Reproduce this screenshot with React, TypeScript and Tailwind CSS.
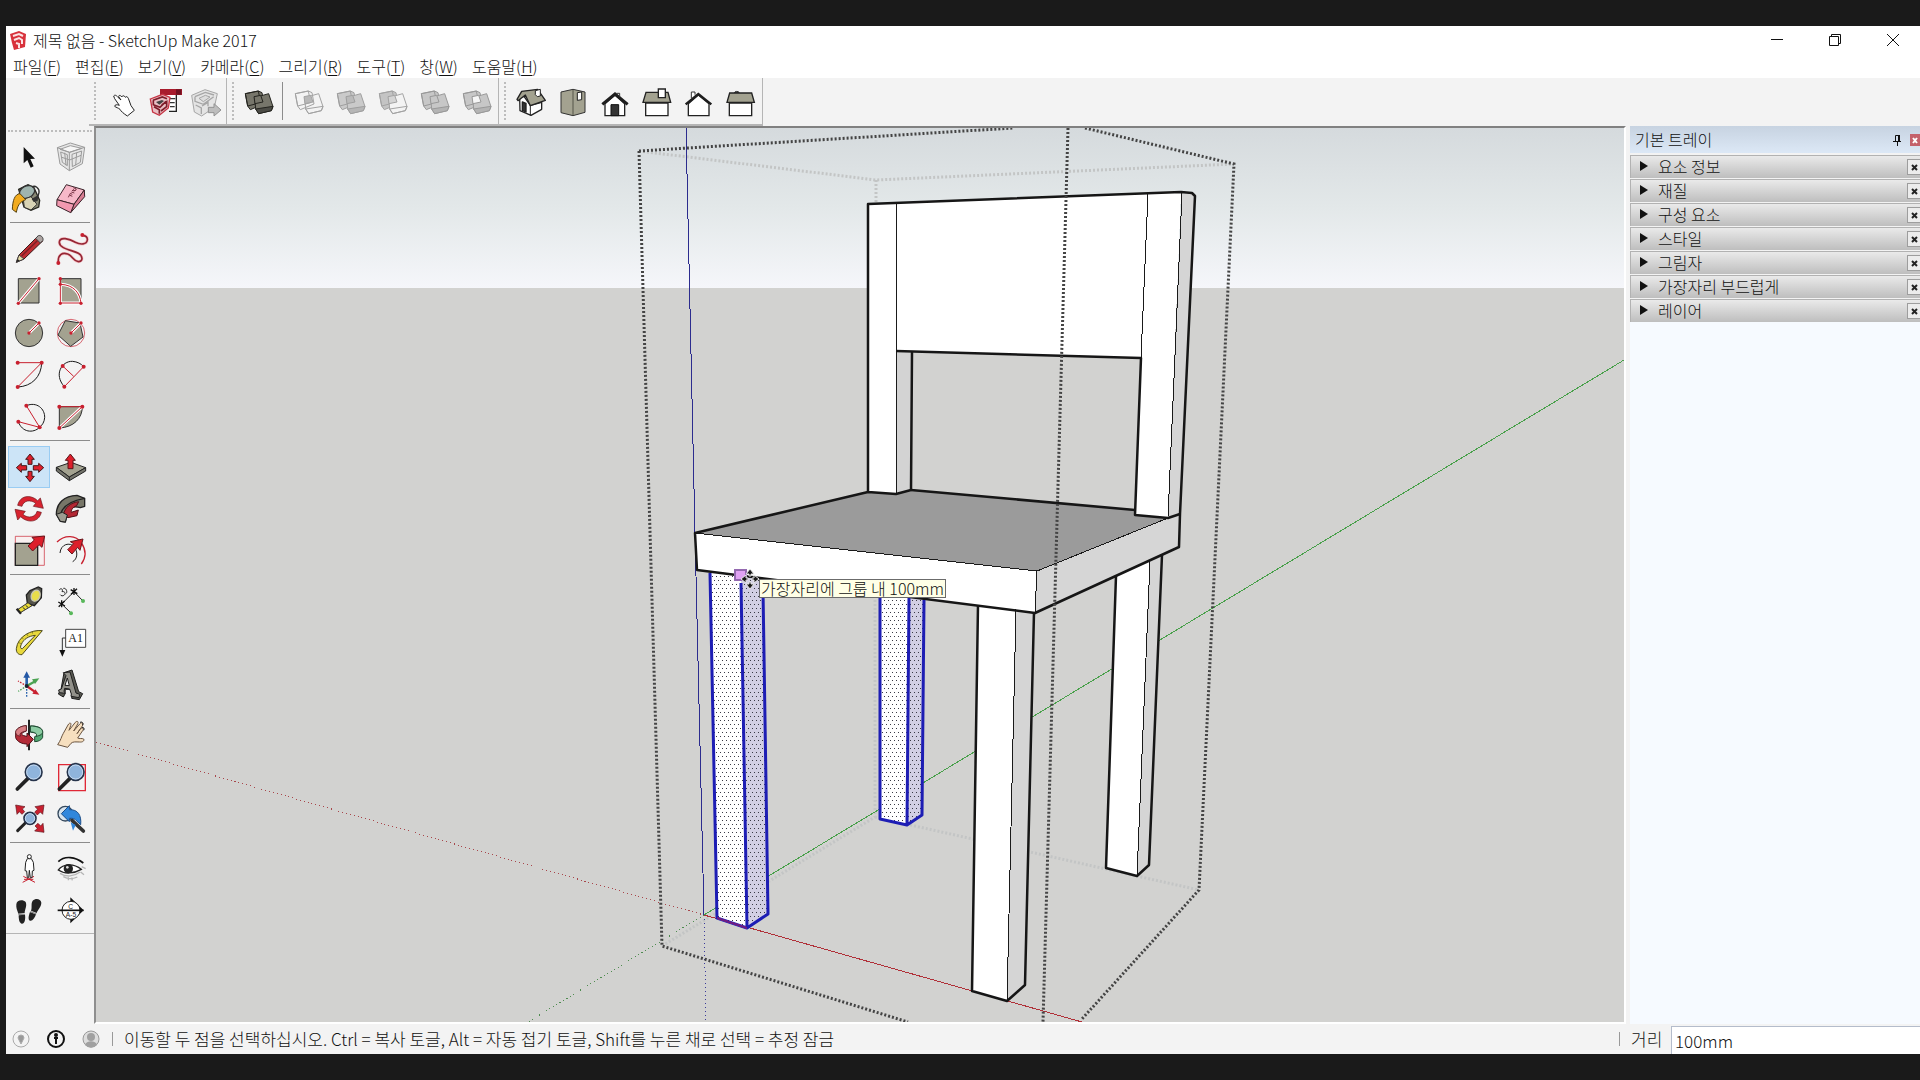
import type { ReactNode } from "react";

const RED = "#c8202f";
const INK = "#1a1a1a";
const STONE = "#a3a290";

const menus = [
  { label: "파일", hotkey: "F" },
  { label: "편집", hotkey: "E" },
  { label: "보기", hotkey: "V" },
  { label: "카메라", hotkey: "C" },
  { label: "그리기", hotkey: "R" },
  { label: "도구", hotkey: "T" },
  { label: "창", hotkey: "W" },
  { label: "도움말", hotkey: "H" },
];

const panels = ["요소 정보", "재질", "구성 요소", "스타일", "그림자", "가장자리 부드럽게", "레이어"];

// Icons are drawn at three units to the pixel, "at" is the corner of a 42px cell
const Tool = ({
  name,
  at,
  active,
  children,
}: {
  name: string;
  at: string;
  active?: boolean;
  children: ReactNode;
}) => (
  <button
    type="button"
    aria-label={name}
    className={
      active
        ? "h-[42px] w-[42px] shrink-0 border border-[#99ccf3] bg-[#cce4f7]"
        : "h-[42px] w-[42px] shrink-0 border border-transparent"
    }
  >
    <svg viewBox={at + " 126 126"} className="-m-px block h-[42px] w-[42px] max-w-none" fill="none">
      {children}
    </svg>
  </button>
);

const Dots = ({ points, r = 6 }: { points: number[][]; r?: number }) => (
  <g fill={RED}>
    {points.map(([x, y]) => (
      <circle key={x + "-" + y} cx={x} cy={y} r={r} />
    ))}
  </g>
);

const Grip = () => (
  <div className="my-1 mr-1 w-0 border-l-2 border-dotted border-[#bdbdbd]" />
);

const Row = ({ children }: { children: ReactNode }) => <div className="flex">{children}</div>;

const Rule = () => <div className="mx-[2px] mt-[2px] mb-[5px] h-px bg-[#8c8c8c]" />;

const Solids = ({
  name,
  back,
  front,
  side,
  inner,
  line,
}: {
  name: string;
  back: string;
  front: string;
  side: string;
  inner: string;
  line: string;
}) => (
  <Tool name={name} at="474 0">
    <g stroke={line} strokeWidth="3" strokeLinejoin="round">
      <path d="M496 41 535 33 546 38 552 72 511 89 503 78Z" fill={back} />
      <path d="M496 41 535 33 542 68 503 78Z" />
      <path d="M524 53 566 41 579 80 574 92 536 101 527 87Z" fill={front} />
      <path d="M527 87 579 79 574 92 536 101Z" fill={side} />
      <path d="M522 50 542 46 549 66 525 71Z" fill={inner} />
    </g>
  </Tool>
);

const Lens = ({ cx, cy, r }: { cx: number; cy: number; r: number }) => (
  <>
    <circle cx={cx} cy={cy} r={r} fill="#8fb4dc" stroke="#26334a" strokeWidth="5" />
    <circle cx={cx} cy={cy} r={r - 4} stroke="#c4d8ee" strokeWidth="3" />
  </>
);

const TopBar = () => (
  <div className="flex h-[49px] shrink-0 bg-[#f3f3f3]">
    <div className="ml-[83px] flex h-12 border-b-2 border-[#b5b5b5]">
      <div className="flex border-r border-[#b5b5b5] pl-[5px]">
        <Grip />
        <div className="flex w-[126px] items-center pl-[2px]">
          <Tool name="구성 요소 조작" at="66 0">
            <path d="M101 48c4-5 9-1 13 4l9 8-7-10c0-6 6-4 10 1 0-5 7-5 10 1 2-4 7-2 9 3l8 22 10 14-21 17c-12-8-19-14-22-20-6-5-11-5-16-9 0-5 7-6 14-3l-14-20z" fill="#fff" stroke="#222" strokeWidth="3" />
          </Tool>
          <Tool name="3D Warehouse" at="192 0">
            <path d="M247 30h42v64h-22" fill="#fff" stroke="#222" strokeWidth="4" />
            <path d="M240 27h66v18h-66z" fill="#a81b2c" />
            <path d="M288 28h16v16h-16z" fill="#701120" />
            <path d="M270 56h16M270 68h14M270 80h14" stroke="#333" strokeWidth="4" />
            <path d="M211 57 248 43 270 52 265 84 238 106 218 96Z" fill="#e9bfc4" stroke="#c63545" strokeWidth="4" />
            <path d="M219 61 247 51 261 56M220 61v13l20 8 18-18M222 80l16 9v12M245 75l15-10v15l-17 13" stroke="#7d1c29" strokeWidth="5" />
            <path d="M228 66l18-6 6 3-14 11z" fill="#444" />
          </Tool>
          <Tool name="구성 요소 공유" at="318 0">
            <g stroke="#a6a6a6" strokeWidth="3">
              <path d="M335 46 375 29 412 41 403 82 365 108 343 96Z" fill="#e4e4e4" />
              <path d="M345 50 376 37 402 45M345 50v14l25 9 31-23M347 75l17 9v18M366 78l18-11v12" strokeWidth="4" />
              <path d="M357 55l19-9 14 5-20 14z" fill="#ddd" />
              <path d="M385 82h17V71l21 19-21 18V98h-17z" fill="#bdbdbd" stroke="#929292" />
            </g>
          </Tool>
        </div>
      </div>
      <div className="flex border-r border-[#b5b5b5] pl-[5px]">
        <Grip />
        <div className="flex items-center">
          <Solids name="외부 셸" back="#77766b" front="#77766b" side="#4c4c46" inner="#77766b" line="#24241f" />
          <div className="mr-[5px] ml-[2px] h-[38px] w-px bg-[#8c8c8c]" />
          <Solids name="교차" back="none" front="none" side="none" inner="#b8b8b8" line="#a3a3a3" />
          <Solids name="합침" back="#cacaca" front="#cacaca" side="#b6b6b6" inner="#bababa" line="#9f9f9f" />
          <Solids name="빼기" back="#c4c4c4" front="#f3f3f3" side="none" inner="#d4d4d4" line="#a3a3a3" />
          <Solids name="자르기" back="#c7c7c7" front="#c7c7c7" side="#b4b4b4" inner="#c7c7c7" line="#999" />
          <Solids name="분할" back="#c7c7c7" front="#c7c7c7" side="#b4b4b4" inner="#f6f6f6" line="#999" />
        </div>
      </div>
      <div className="flex border-r border-[#b5b5b5] pl-[5px]">
        <Grip />
        <div className="flex items-center">
          <Tool name="등각 투영" at="91 30">
            <g stroke="#222" strokeWidth="4" strokeLinejoin="round">
              <path d="M120 84 133 79 152 106 186 97V118L154 136 121 122Z" fill="#fff" />
              <path d="M152 106v30" strokeWidth="3" />
              <path d="M128 96l11 4v26l-11-5z" fill="#333" />
              <path d="M126 64 174 58 197 91 152 107 137 75 115 92 112 88Z" fill={STONE} />
              <path d="M167 62l15-4v20l-9 2-6-6z" fill="#fff" strokeWidth="3" />
            </g>
          </Tool>
          <Tool name="맨 위" at="217 30">
            <path d="M244 66 280 58 316 66V127L280 137 244 128Z" fill={STONE} stroke="#333" strokeWidth="3" />
            <path d="M280 60v76" stroke="#555548" strokeWidth="3" />
            <path d="M293 68l13-2v23l-13 2z" fill="#fff" stroke="#222" strokeWidth="3" />
          </Tool>
          <Tool name="정면" at="343 30">
            <path d="M376 101V137h59V101L406 75Z" fill="#fff" stroke="#222" strokeWidth="4" />
            <path d="M394 104h23v33h-23z" fill="#333" stroke="#111" strokeWidth="3" />
            <path d="M368 103 406 72 444 103" stroke="#1e1e1e" strokeWidth="9" />
            <path d="M410 70h10v12" stroke="#333" strokeWidth="3" />
          </Tool>
          <Tool name="오른쪽" at="469 30">
            <path d="M498 99h67v38h-67z" fill="#fff" stroke="#222" strokeWidth="4" />
            <path d="M499 67h66l8 30h-83z" fill={STONE} stroke="#222" strokeWidth="4" />
            <path d="M536 57h21v26h-21z" fill="#fff" stroke="#222" strokeWidth="4" />
          </Tool>
          <Tool name="뒤" at="595 30">
            <path d="M635 84V66h11v8" fill="#fff" stroke="#333" strokeWidth="3" />
            <path d="M626 101V137h62V101L656 75Z" fill="#fff" stroke="#222" strokeWidth="4" />
            <path d="M618 103 656 72 695 103" stroke="#1e1e1e" strokeWidth="7" />
          </Tool>
          <Tool name="왼쪽" at="721 30">
            <path d="M764 68c1-5 13-5 15 0z" fill="#777" stroke="#333" strokeWidth="3" />
            <path d="M749 99h67v38h-67z" fill="#fff" stroke="#222" strokeWidth="4" />
            <path d="M750 69h66l8 28h-82z" fill={STONE} stroke="#222" strokeWidth="4" />
          </Tool>
        </div>
      </div>
    </div>
  </div>
);

const SideBar = () => (
  <div className="h-[807px] w-[88px] shrink-0 border-b border-[#b5b5b5] bg-[#f3f3f3] px-[2px]">
    <div className="mt-[3px] mb-[4px] border-t-2 border-dotted border-[#bdbdbd]" />
    <Row>
      <Tool name="선택" at="24 48">
        <path d="M71 81V130L82 120 92 143 101 139 91 117 105 116Z" fill="#111" />
      </Tool>
      <Tool name="구성 요소 만들기" at="150 48">
        <g stroke="#9b9b9b" strokeWidth="3" strokeLinejoin="round">
          <path d="M172 83 211 69 254 82 247 131 208 152 180 132Z" fill="#e6e6e6" />
          <path d="M180 88 211 77 245 85 209 97Z" fill="#f6f6f6" />
          <path d="M172 83 208 97 254 82M208 97V152M182 96l20 8v33l-15-10zM216 103l29-10-4 34-24 13z" />
          <path d="M186 112l23 8 34-14M194 98l4 38M230 98l-3 38" />
        </g>
      </Tool>
    </Row>
    <Row>
      <Tool name="페인트통" at="24 174">
        <path d="M56 208 84 194 102 203 119 241 116 261 93 271 72 261Z" fill="#8a8a76" stroke="#26261f" strokeWidth="4" />
        <ellipse cx="81" cy="216" rx="24" ry="18" transform="rotate(-28 81 216)" fill="#9fb4ae" stroke="#333" strokeWidth="4" />
        <path d="M70 238 93 230 111 253 93 270 73 262Z" fill="#d8d3b5" stroke="#333" strokeWidth="3" />
        <path d="M96 202c8-8 23 2 21 16-2 13-11 23-20 19" stroke="#2e2e2e" strokeWidth="4" />
        <path d="M60 221C44 222 38 242 37 268L49 277C53 258 57 247 77 239Z" fill="#f2ab1d" stroke="#57420d" strokeWidth="3" />
        <path d="M95 237l20-12-2 18-12 3z" fill="#333" />
      </Tool>
      <Tool name="지우개" at="150 174">
        <g stroke="#3a2229" strokeWidth="3" strokeLinejoin="round">
          <path d="M199 194 253 210 222 253 171 239Z" fill="#f7b8c8" />
          <path d="M253 210 254 230 212 278 222 253Z" fill="#d97d93" />
          <path d="M171 239 222 253 212 278 170 257Z" fill="#f299b0" />
        </g>
        <path d="M205 232l6-12 6 3M210 226l7 3M216 211l7 2M214 216l9 3M220 203l9 4-4 6-6-5" stroke="#773344" strokeWidth="3" />
      </Tool>
    </Row>
    <Rule />
    <Row>
      <Tool name="선" at="24 324">
        <path d="M49 427 57 405 113 349 129 362 72 417Z" fill="#bf2d31" stroke="#3b1b1b" strokeWidth="3" />
        <path d="M49 427 57 405 72 417Z" fill="#e4d9a4" stroke="#444" strokeWidth="3" />
        <path d="M49 427 53 417 59 422Z" fill="#222" />
        <path d="M107 355 115 347C122 344 131 352 129 361L121 369Z" fill="#ada4a2" stroke="#444" strokeWidth="3" />
        <path d="M65 408 112 362" stroke="#792026" strokeWidth="4" />
      </Tool>
      <Tool name="자유곡선" at="150 324">
        <path d="M175 428C173 403 187 397 203 402C218 407 220 424 235 425C251 424 248 407 235 400C216 390 177 386 178 366C180 349 208 356 226 367C242 375 260 374 262 360C263 351 256 347 248 346" stroke="#f6c9cc" strokeWidth="9" />
        <path d="M175 428C173 403 187 397 203 402C218 407 220 424 235 425C251 424 248 407 235 400C216 390 177 386 178 366C180 349 208 356 226 367C242 375 260 374 262 360C263 351 256 347 248 346" stroke="#962634" strokeWidth="5" />
        <Dots points={[[175, 429], [247, 345]]} />
      </Tool>
    </Row>
    <Row>
      <Tool name="직사각형" at="24 450">
        <path d="M55 476h62v73H55z" fill={STONE} stroke="#333" strokeWidth="3" />
        <path d="M55 550 117 476" stroke="#fff" strokeWidth="9" />
        <path d="M55 550 117 476" stroke={RED} strokeWidth="3" />
        <Dots points={[[55, 550], [117, 476]]} r={5} />
      </Tool>
      <Tool name="회전된 직사각형" at="150 450">
        <path d="M181 476h62v73h-62z" fill={STONE} stroke="#333" strokeWidth="3" />
        <path d="M181 493C222 494 240 520 243 549H181Z" stroke="#fff" strokeWidth="9" />
        <path d="M181 476V549H243C240 520 222 494 181 493" stroke={RED} strokeWidth="3" />
        <Dots points={[[181, 476], [181, 493], [181, 550], [243, 550]]} r={5} />
      </Tool>
    </Row>
    <Row>
      <Tool name="원" at="24 576">
        <circle cx="87" cy="639" r="41" fill={STONE} stroke="#333" strokeWidth="3" />
        <path d="M87 639 117 609" stroke="#fff" strokeWidth="9" />
        <path d="M87 639 117 609" stroke={RED} strokeWidth="3" />
        <Dots points={[[87, 639], [117, 609]]} r={5} />
      </Tool>
      <Tool name="다각형" at="150 576">
        <circle cx="213" cy="639" r="41" stroke={RED} strokeWidth="2" />
        <path d="M196 602 240 609 249 651 212 679 174 645Z" fill={STONE} stroke="#333" strokeWidth="3" />
        <path d="M213 639 243 609" stroke="#fff" strokeWidth="9" />
        <path d="M213 639 243 609" stroke={RED} strokeWidth="3" />
        <Dots points={[[213, 639], [243, 609]]} r={5} />
      </Tool>
    </Row>
    <Row>
      <Tool name="호" at="24 702">
        <path d="M125 728C124 770 96 799 53 801" stroke={INK} strokeWidth="3" />
        <path d="M53 728H125L53 801" stroke={RED} strokeWidth="3" />
        <Dots points={[[53, 728], [125, 728], [53, 801]]} />
      </Tool>
      <Tool name="2점 호" at="150 702">
        <path d="M193 800C160 763 186 723 217 724C232 725 243 731 251 740" stroke={INK} strokeWidth="3" />
        <path d="M193 800 251 740M188 738 221 769" stroke={RED} strokeWidth="3" />
        <Dots points={[[193, 800], [251, 740], [188, 738]]} />
      </Tool>
    </Row>
    <Row>
      <Tool name="3점 호" at="24 828">
        <path d="M79 857C110 844 135 866 134 893C133 906 127 915 119 922C99 941 66 937 55 905" stroke={INK} strokeWidth="3" />
        <path d="M79 857 119 922 55 905" stroke={RED} strokeWidth="3" />
        <Dots points={[[79, 857], [119, 922], [55, 905]]} />
      </Tool>
      <Tool name="파이" at="150 828">
        <path d="M178 860H247C247 895 221 922 178 924Z" fill={STONE} stroke="#333" strokeWidth="3" />
        <path d="M178 924 247 860" stroke="#fff" strokeWidth="9" />
        <path d="M178 860H247L178 924" stroke={RED} strokeWidth="3" />
        <Dots points={[[178, 860], [247, 860], [178, 924]]} />
      </Tool>
    </Row>
    <Rule />
    <Row>
      <Tool name="이동" at="24 33" active>
        <g fill="#dd1f2b" stroke="#44191c" strokeWidth="3" strokeLinejoin="round">
          <path d="M90 57 103 73H96V88H84V73H77Z" />
          <path d="M90 140 77 124H84V109H96V124H103Z" />
          <path d="M49 98 64 85V92H80V105H64V112Z" />
          <path d="M131 98 116 112V105H100V92H116V85Z" />
        </g>
      </Tool>
      <Tool name="밀기/끌기" at="150 33">
        <g stroke="#222" strokeWidth="3" strokeLinejoin="round">
          <path d="M169 97 213 82 257 98 208 126Z" fill={STONE} />
          <path d="M169 97V108L208 137 257 108V98L208 126Z" fill="#73736a" />
          <path d="M208 126v11" />
          <path d="M211 57 226 76H219V101H204V76H196Z" fill="#dd1f2b" stroke="#5b1519" />
        </g>
      </Tool>
    </Row>
    <Row>
      <Tool name="회전" at="24 159">
        <g fill="#d8232f" stroke="#6b161d" strokeWidth="2" strokeLinejoin="round">
          <path d="M53 211C60 181 91 177 113 197L121 189 130 220 100 214 107 205C91 192 70 197 66 214Z" />
          <path d="M124 232C117 262 84 266 62 245L53 255 45 223 76 229 69 238C84 252 107 247 111 229Z" />
        </g>
      </Tool>
      <Tool name="따라가기" at="150 159">
        <g stroke="#222" strokeWidth="4" strokeLinejoin="round">
          <path d="M169 238C169 204 193 182 231 181L254 190V214L241 218C216 211 203 222 202 237L196 261 181 259Z" fill="#777668" />
          <path d="M180 258C177 220 207 198 254 190" />
          <path d="M190 240C194 217 212 203 236 200L230 212C215 218 213 228 214 232L235 225 231 242 204 248Z" fill="#b32733" stroke="#511016" strokeWidth="3" />
          <path d="M169 238 181 259 196 261 202 240 187 232Z" fill="#9d9c91" strokeWidth="3" />
        </g>
      </Tool>
    </Row>
    <Row>
      <Tool name="배율" at="24 285">
        <path d="M46 304h87v87H46z" fill="#f8f0f0" stroke={RED} strokeWidth="2" />
        <path d="M46 325h67v66H46z" fill={STONE} stroke="#222" strokeWidth="4" />
        <path d="M134 303 126 337 117 329 98 348 84 333 103 315 96 307Z" fill="#dd1f2b" stroke="#68161c" strokeWidth="3" />
      </Tool>
      <Tool name="오프셋" at="150 285">
        <path d="M171 321C194 298 228 300 244 323C258 344 258 368 244 387" stroke={RED} strokeWidth="4" />
        <path d="M180 354C182 327 210 320 223 336C234 350 233 372 218 380" stroke="#222" strokeWidth="3" />
        <path d="M249 312 240 346 233 337 216 357 203 344 221 326 211 320Z" fill="#dd1f2b" stroke="#68161c" strokeWidth="3" />
      </Tool>
    </Row>
    <Rule />
    <Row>
      <Tool name="줄자" at="24 435">
        <path d="M90 467 115 456 125 461 124 488 103 512 82 505 79 480Z" fill="#55544c" stroke="#222" strokeWidth="4" />
        <ellipse cx="107" cy="482" rx="13" ry="17" transform="rotate(22 107 482)" fill="#e8dd4b" stroke="#c7c6b4" strokeWidth="4" />
        <path d="M84 503 96 512 61 533 51 525Z" fill="#eadb37" stroke="#333" strokeWidth="3" />
        <path d="M50 521 63 536" stroke="#222" strokeWidth="7" />
        <path d="M68 517l7 6M77 511l7 6" stroke="#333" strokeWidth="3" />
      </Tool>
      <Tool name="치수" at="150 435">
        <path d="M185 507 222 470 248 497M185 507 212 533" stroke="#222" strokeWidth="3" />
        <path d="M175 501l20 12M185 496v21M176 515l18-17M212 464l20 12M222 459v21M213 478l18-17" stroke="#111" strokeWidth="4" />
        <path d="M178 464c6-6 12-1 8 6 7-2 13 5 7 10-4 4-10 3-12-1M190 460c7-2 13 8 9 15" stroke="#222" strokeWidth="3" />
        <circle cx="249" cy="498" r="6" fill="#58b85a" />
        <circle cx="213" cy="535" r="6" fill="#58b85a" />
      </Tool>
    </Row>
    <Row>
      <Tool name="각도기" at="24 561">
        <path d="M127 587C94 583 53 604 49 641C48 653 56 660 66 659ZM106 601 67 641C61 642 60 635 64 628C71 612 86 603 106 601Z" fill="#e8d83c" fillRule="evenodd" stroke="#4b481c" strokeWidth="3" />
        <path d="M55 622l8 4M65 607l6 6M80 597l4 6M97 590l1 6" stroke="#6b661f" strokeWidth="2" />
      </Tool>
      <Tool name="문자" at="150 561">
        <path d="M197 583h60v54h-60z" fill="#fff" stroke="#444" strokeWidth="3" />
        <path d="M197 609H187V650" stroke="#333" strokeWidth="3" />
        <path d="M178 645h18l-9 20z" fill="#111" />
        <text x="227" y="620" textAnchor="middle" fill="#222" className="font-['Liberation_Serif'] text-[36px] font-normal">A1</text>
      </Tool>
    </Row>
    <Row>
      <Tool name="축" at="24 687">
        <path d="M80 753V724" stroke="#2a63ae" strokeWidth="8" />
        <path d="M70 728 80 709 90 728Z" fill="#2458a5" />
        <path d="M80 753 103 740" stroke="#4ba353" strokeWidth="7" />
        <path d="M118 730 105 747 96 733Z" fill="#4ba353" />
        <path d="M80 753 103 769" stroke={RED} strokeWidth="7" />
        <path d="M118 779 97 776 106 763Z" fill={RED} />
        <path d="M80 753 54 738" stroke={RED} strokeWidth="4" strokeDasharray="5 4" />
        <path d="M80 753 55 769" stroke="#4ba353" strokeWidth="4" strokeDasharray="5 4" />
        <path d="M80 753V786" stroke="#2a63ae" strokeWidth="4" strokeDasharray="5 4" />
        <circle cx="80" cy="753" r="6" fill="#1c2430" />
      </Tool>
      <Tool name="3D 문자" at="150 687">
        <g stroke="#1e1e1e" strokeWidth="3" strokeLinejoin="round">
          <path d="M192 713 216 705 236 770 248 776 238 794 215 790 216 778 211 763 196 763 195 777 190 786 175 777 183 763Z" fill="#595952" />
          <path d="M190 713 210 711 228 774 239 778 237 788 213 784 214 777 209 762 194 760 192 769 196 775 178 773 176 765 184 762 198 722Z" fill="#92918a" />
          <path d="M202 729 208 752 195 751Z" fill="#f3f3f3" />
        </g>
      </Tool>
    </Row>
    <Rule />
    <Row>
      <Tool name="궤도" at="24 42">
        <path d="M87 59V151" stroke="#222" strokeWidth="6" />
        <path d="M91 78C111 77 128 84 128 96V112C125 121 113 125 104 125V110C112 107 113 103 107 99L91 96Z" fill="#53a973" stroke="#1e4930" strokeWidth="3" />
        <path d="M91 78V96C103 96 114 101 108 109C120 107 129 102 128 95C127 84 111 78 91 78Z" fill="#8ccca3" stroke="#1e4930" strokeWidth="3" />
        <path d="M79 77C61 78 47 87 47 98V113C51 125 66 132 81 132V140L100 118 81 99V109C66 107 56 101 79 93Z" fill="#b32a37" stroke="#4e1219" strokeWidth="3" />
        <path d="M79 77C60 78 46 88 47 98C48 105 55 108 62 108C55 101 66 95 79 93Z" fill="#d88085" stroke="#4e1219" strokeWidth="2" />
      </Tool>
      <Tool name="이동 보기" at="150 42">
        <path d="M173 134C183 120 184 110 190 100L204 75C209 66 215 68 212 77L207 91 226 67C231 61 237 65 233 72L221 93 239 72C245 65 252 69 247 78L231 101 240 88C246 80 254 84 248 92L233 114C238 117 246 114 251 117C254 123 247 127 239 126C228 126 219 124 213 130L203 142Z" fill="#f6dfbf" stroke="#6a5440" strokeWidth="3" />
        <path d="M240 67c6-3 11 2 8 8M246 83c6-2 8 3 5 8" stroke="#222" strokeWidth="3" />
      </Tool>
    </Row>
    <Row>
      <Tool name="확대/축소" at="24 168">
        <path d="M52 267 84 235" stroke="#222" strokeWidth="11" strokeLinecap="round" />
        <Lens cx={101} cy={216} r={25} />
      </Tool>
      <Tool name="확대/축소 창" at="150 168">
        <path d="M176 194h80v78h-80z" stroke="#e02836" strokeWidth="4" />
        <path d="M178 267 210 235" stroke="#222" strokeWidth="11" strokeLinecap="round" />
        <Lens cx={227} cy={216} r={25} />
      </Tool>
    </Row>
    <Row>
      <Tool name="범위 확대" at="24 294">
        <g fill={RED} stroke="#5c1219" strokeWidth="2">
          <path d="M47 315 75 320 67 327 74 335 66 343 58 335 51 343Z" />
          <path d="M132 315 128 343 121 336 112 345 104 336 113 328 105 320Z" />
          <path d="M132 397 104 393 112 385 105 378 114 370 122 378 129 370Z" />
        </g>
        <path d="M53 392 76 369" stroke="#222" strokeWidth="9" strokeLinecap="round" />
        <Lens cx={90} cy={355} r={18} />
      </Tool>
      <Tool name="이전" at="150 294">
        <circle cx="196" cy="341" r="22" fill="#d8e4ee" stroke="#34485c" strokeWidth="4" />
        <path d="M216 361 250 393" stroke="#333" strokeWidth="11" strokeLinecap="round" />
        <path d="M184 341 208 317V329C233 328 245 345 242 374L229 362C225 356 218 354 208 355V365Z" fill="#3187dc" stroke="#1c4e8a" strokeWidth="3" />
        <path d="M212 367 227 375 219 392Z" fill="#3187dc" />
      </Tool>
    </Row>
    <Rule />
    <Row>
      <Tool name="카메라 배치" at="24 444">
        <path d="M68 547 102 529M70 529 105 547M72 538H100" stroke={RED} strokeWidth="3" />
        <g fill="#fff" stroke="#222" strokeWidth="3">
          <path d="M82 476 77 487 75 512 80 513 82 533H86L88 511 91 533H96L97 513 102 511 100 487 94 476Z" />
          <circle cx="88" cy="470" r="6" />
        </g>
      </Tool>
      <Tool name="둘러보기" at="150 444">
        <path d="M175 485C194 466 226 470 250 489" stroke="#111" strokeWidth="5" />
        <path d="M175 510C190 491 220 489 244 508C223 520 195 524 175 510Z" fill="#fff" stroke="#222" strokeWidth="4" />
        <circle cx="205" cy="506" r="14" fill="#222" />
        <circle cx="202" cy="502" r="4" fill="#ddd" />
        <path d="M180 520c18 12 42 10 60-4M190 530c12 7 27 8 42 1M205 532v9M215 533l2 8M245 500l12 6M242 516l10 8" stroke="#b5b5b5" strokeWidth="4" />
      </Tool>
    </Row>
    <Row>
      <Tool name="걷기" at="24 570">
        <g fill="#222">
          <path d="M49 613C50 599 69 597 77 606C82 618 74 629 74 639L55 641C51 630 48 624 49 613Z" />
          <path d="M56 646 75 644C77 657 74 671 66 671C58 671 56 658 56 646Z" />
          <path d="M98 602C106 594 122 595 124 608C124 621 113 629 110 639L93 632C97 622 92 611 98 602Z" />
          <path d="M90 636 108 643C104 655 97 664 90 662C83 660 86 646 90 636Z" />
        </g>
        <path d="M55 643h20M91 635l18 7" stroke="#888" strokeWidth="4" />
      </Tool>
      <Tool name="단면" at="150 570">
        <path d="M211 592 251 631 211 670Z" fill="#111" />
        <circle cx="213" cy="631" r="27" fill="#fff" stroke="#222" strokeWidth="3" />
        <path d="M173 631H251" stroke="#111" strokeWidth="5" />
        <text x="212" y="626" textAnchor="middle" fill="#222" className="font-['Liberation_Sans'] text-[20px] font-normal">C</text>
        <text x="213" y="651" textAnchor="middle" fill="#222" className="font-['Liberation_Sans'] text-[20px] font-normal">A-5</text>
      </Tool>
    </Row>
  </div>
);

const Model = () => (
  <svg
    viewBox="96 128 1528 894"
    preserveAspectRatio="xMinYMin slice"
    shapeRendering="crispEdges"
    className="block h-full w-full"
    fill="none"
  >
    <defs>
      <linearGradient id="sky" x1="0" y1="0" x2="0" y2="1">
        <stop offset="0" stopColor="#d5dadd" />
        <stop offset="0.5" stopColor="#e3e8e9" />
        <stop offset="1" stopColor="#f5f6fa" />
      </linearGradient>
      <pattern id="stipple" width="4" height="8" patternUnits="userSpaceOnUse">
        <path d="M0 0h1v1H0zM2 4h1v1H2z" fill="#3a3a46" />
      </pattern>
    </defs>
    <rect x="96" y="128" width="1528" height="894" fill="#d2d2d0" />
    <rect x="96" y="128" width="1528" height="160" fill="url(#sky)" />

    {/* hidden edges of the selection box */}
    <g stroke="#c3c5c5" strokeWidth="3" strokeDasharray="2 2" shapeRendering="auto">
      <path d="M639 151 876 180 1234 164M876 180V204" />
      <path d="M875 600V817L662 946M875 817 1199 890" />
    </g>

    {/* axes */}
    <path d="M96 742 704 915" stroke="#a8474c" strokeDasharray="1 3" />
    <path d="M704 915 528 1022" stroke="#4f8c50" strokeDasharray="1 3" />
    <path d="M704 915 706 1022" stroke="#3a3a9a" strokeDasharray="1 3" />
    <path d="M704 915 1624 360" stroke="#48a04a" />
    <path d="M704 915 1082 1022" stroke="#b03038" />
    <path d="M686 128 695 533 704 915" stroke="#2c2c8e" />

    {/* back rest */}
    <path d="M868 204 1181 192 1168 518 1135 515 1141 358 896 351V494L868 492Z" fill="#fff" />
    <path d="M1182 192 1195 195 1180 514 1168 518Z" fill="#d5d5d5" />
    <path d="M896 351 912 352 911 490 896 494Z" fill="#d3d3d3" />

    {/* seat */}
    <path d="M695 533 868 492 896 494 911 490 1135 510V515L1168 518 1037 571Z" fill="#9b9b9b" />
    <path d="M1037 571 1168 518 1180 514 1179 547 1035 613Z" fill="#d6d6d6" />

    {/* legs */}
    <path d="M978 603 1016 609 1007 1001 972 991Z" fill="#fff" />
    <path d="M1016 609 1034 612 1025 985 1007 1001Z" fill="#d5d5d5" />
    <path d="M1116 576 1150 561 1137 876 1106 868Z" fill="#fff" />
    <path d="M1150 561 1162 555 1149 865 1137 876Z" fill="#d5d5d5" />
    <path d="M710 571 741 575 747 928 717 918Z" fill="#fff" />
    <path d="M741 575 763 578 768 914 747 928Z" fill="#d2cfe4" />
    <path d="M880 592 909 596 907 825 880 819Z" fill="#fff" />
    <path d="M909 596 924 598 922 815 907 825Z" fill="#d2cfe4" />
    <path d="M710 571 763 578 768 914 747 928 717 918ZM880 592 924 598 922 815 907 825 880 819Z" fill="url(#stipple)" />
    <path d="M695 533 1037 571 1035 613 697 570Z" fill="#fff" />

    <g stroke={INK} strokeWidth="1">
      <path d="M896 203V494M1148 194 1141 358M1182 193 1168 517" />
      <path d="M695 533 1037 571 1168 518M1037 571 1035 612" />
      <path d="M1016 609 1007 1001M1150 561 1137 876" />
    </g>
    <g stroke="#161616" strokeWidth="2.5" strokeLinejoin="round" shapeRendering="auto">
      <path d="M868 492V204L1181 192 1192 193 1195 196 1180 514 1179 547 1035 613 697 570 695 533 868 492 896 494 911 490 912 352" />
      <path d="M896 351 1141 358 1135 515 1168 518 1180 514M911 490 1135 510" />
      <path d="M978 605 972 991 1007 1001 1025 985 1034 612" />
      <path d="M1116 576 1106 868 1137 876 1149 865 1162 555" />
    </g>
    <g stroke="#1d1db4" strokeWidth="3" strokeLinejoin="round" shapeRendering="auto">
      <path d="M710 573 717 918 747 928 768 914 763 590M741 583 747 928" />
      <path d="M880 597V819L907 825 922 815 924 600M909 597 907 825" />
    </g>
    <path d="M717 918 747 928" stroke="#6b1d86" strokeWidth="2" />

    {/* selection box */}
    <g stroke="#444" strokeWidth="3" strokeDasharray="2 2" shapeRendering="auto">
      <path d="M639 151 1013 128M1085 128 1234 164 1199 890 1081 1020" />
      <path d="M639 151 662 946 908 1022M1068 128 1043 1022" />
    </g>

    {/* snap point and move cursor */}
    <rect x="735" y="570" width="11" height="10" fill="#e0a2f3" stroke="#9469b0" strokeWidth="2" />
    <g fill={INK} stroke="#e8e8e8" strokeWidth="1" shapeRendering="auto">
      <path d="M750 569 754 574H751V576H749V574H746Z" />
      <path d="M750 589 746 584H749V582H751V584H754Z" />
      <path d="M741 579 746 575V578H748V580H746V583Z" />
      <path d="M759 579 754 583V580H752V578H754V575Z" />
    </g>
  </svg>
);

const Tray = () => (
  <aside className="-mt-px w-[290px] shrink-0 bg-[#f6faff]">
    <header className="flex h-[27px] items-center bg-linear-to-b from-[#c7d3e1] to-[#dce8f6] pl-[5px]">
      <h2 className="grow pb-[2px] text-base leading-6 font-light text-[#111]">기본 트레이</h2>
      <button type="button" aria-label="자동 숨김" className="mr-[7px] h-3 w-3">
        <svg viewBox="0 0 12 12" className="h-3 w-3" fill="none" stroke="#111">
          <path d="M4.500 7V1.500h4M2 7.500h8M6.500 8v4" />
          <path d="M8 1v6" strokeWidth="2" />
        </svg>
      </button>
      <button type="button" aria-label="닫기" className="h-3 w-[10px] bg-[#c4616b]">
        <svg viewBox="0 0 10 12" className="h-3 w-[10px]" stroke="#fff" strokeWidth="2">
          <path d="M3 4 7 9M7 4 3 9" />
        </svg>
      </button>
    </header>
    <div className="flex flex-col gap-px bg-[#f3f3f3] pt-[2px]">
      {panels.map((panel) => (
        <section
          key={panel}
          className="flex h-[23px] items-center border-t border-l border-[#b2b2b2] bg-linear-to-b from-[#eaeaea] to-[#bebebe]"
        >
          <button type="button" className="flex grow items-center pb-[2px] text-left text-base leading-5 font-light text-[#111]">
            <svg viewBox="0 0 8 10" className="mr-[10px] ml-[9px] h-[10px] w-2" fill="#111">
              <path d="M0 0 8 5 0 10Z" />
            </svg>
            {panel}
          </button>
          <button type="button" aria-label={panel + " 닫기"} className="h-4 w-[13px] border border-r-0 border-[#9d9d9d] bg-[#ececec]">
            <svg viewBox="0 0 12 14" className="h-[14px] w-3" stroke="#222" strokeWidth="2">
              <path d="M4 5 9 10M9 5 4 10" />
            </svg>
          </button>
        </section>
      ))}
    </div>
  </aside>
);

const StatusBar = () => (
  <footer className="flex h-[30px] shrink-0 items-center bg-[#f3f3f3] text-[#111]">
    <div className="flex gap-[17px] pl-[6px]">
      <svg viewBox="0 0 18 18" className="h-[18px] w-[18px]" fill="none" stroke="#aaa">
        <circle cx="9" cy="9" r="8" />
        <path d="M9 14 6 8a3 3 0 1 1 6 0z" fill="#999" />
      </svg>
      <svg viewBox="0 0 18 18" className="h-[18px] w-[18px]" fill="none" stroke="#111" strokeWidth="2">
        <circle cx="9" cy="9" r="8" />
        <path d="M9 7v7M7 8h4" />
        <circle cx="9" cy="5" r="1" />
      </svg>
      <svg viewBox="0 0 18 18" className="h-[18px] w-[18px]" fill="#a0a0a0">
        <circle cx="9" cy="9" r="8" fill="#ddd" stroke="#999" />
        <circle cx="9" cy="7" r="4" />
        <path d="M3 15c1-5 11-5 12 0a8 8 0 0 1-12 0z" />
      </svg>
    </div>
    <div className="mr-[11px] ml-3 h-[14px] w-px bg-[#999]" />
    <p className="grow text-[17px] leading-6 font-light">
      이동할 두 점을 선택하십시오. Ctrl = 복사 토글, Alt = 자동 접기 토글, Shift를 누른 채로 선택 = 추정 잠금
    </p>
    <div className="h-[14px] w-px bg-[#999]" />
    <label htmlFor="distance" className="w-[51px] pl-[11px] text-[17px] leading-6 font-light">
      거리
    </label>
    <input
      id="distance"
      defaultValue="100mm"
      className="h-[28px] w-[249px] self-end border-t border-l border-[#b4bccb] bg-white pl-[3px] text-[17px] leading-6 font-light outline-none"
    />
  </footer>
);

const App = () => {
  return (
    <div className="h-screen bg-[#1a1a1a] pt-[26px] pb-[26px] pl-[6px] font-['Noto_Sans_CJK_KR','Noto_Sans',sans-serif]">
      <div className="flex h-full flex-col overflow-hidden bg-[#f3f3f3]">
        <header className="flex h-[28px] shrink-0 items-center bg-white">
          <svg viewBox="0 0 18 20" className="ml-[3px] h-5 w-[18px]" fill="#d8323c">
            <path d="M1 4 10 1 17 4 16 17 5 20 3 13Z" />
            <path d="M4 6 10 4 14 6M5 10l5-2 3 2v4M7 13l3 1v4" fill="none" stroke="#fbe3e4" strokeWidth="2" />
          </svg>
          <h1 className="ml-[6px] grow text-base leading-6 font-light text-[#111]">제목 없음 - SketchUp Make 2017</h1>
          <div className="-mr-[2px] flex">
            <button type="button" aria-label="최소화" className="flex h-7 w-[58px] items-center justify-center">
              <svg viewBox="0 0 12 12" className="h-3 w-3" stroke="#111">
                <path d="M0 5.500h12" />
              </svg>
            </button>
            <button type="button" aria-label="이전 크기로" className="flex h-7 w-[58px] items-center justify-center">
              <svg viewBox="0 0 12 12" className="h-3 w-3" fill="none" stroke="#111">
                <path d="M.5 2.500h9v9h-9zM2.500 2.500v-2h9v9h-2" />
              </svg>
            </button>
            <button type="button" aria-label="닫기" className="flex h-7 w-[58px] items-center justify-center">
              <svg viewBox="0 0 12 12" className="h-3 w-3" stroke="#111">
                <path d="M0 0 12 12M12 0 0 12" />
              </svg>
            </button>
          </div>
        </header>
        <nav className="flex h-6 shrink-0 gap-[14px] bg-white pl-[7px]">
          {menus.map(({ label, hotkey }) => (
            <button key={hotkey} type="button" className="text-base leading-6 font-light text-[#111]">
              {label}(<u className="underline-offset-2">{hotkey}</u>)
            </button>
          ))}
        </nav>
        <TopBar />
        <main className="flex min-h-0 grow">
          <SideBar />
          <div className="relative -mt-px min-w-0 grow overflow-hidden border-t-2 border-r-2 border-b-2 border-l-2 border-t-[#808080] border-r-white border-b-white border-l-[#8e8e8e]">
            <Model />
            <div className="absolute top-[451px] left-[663px] h-[19px] border border-[#6b6b6b] bg-[#ffffe6] px-px text-base leading-[17px] font-light whitespace-nowrap text-[#111]">
              가장자리에 그룹 내 100mm
            </div>
          </div>
          <div className="w-1 shrink-0" />
          <Tray />
        </main>
        <StatusBar />
      </div>
    </div>
  );
};

export default App;
